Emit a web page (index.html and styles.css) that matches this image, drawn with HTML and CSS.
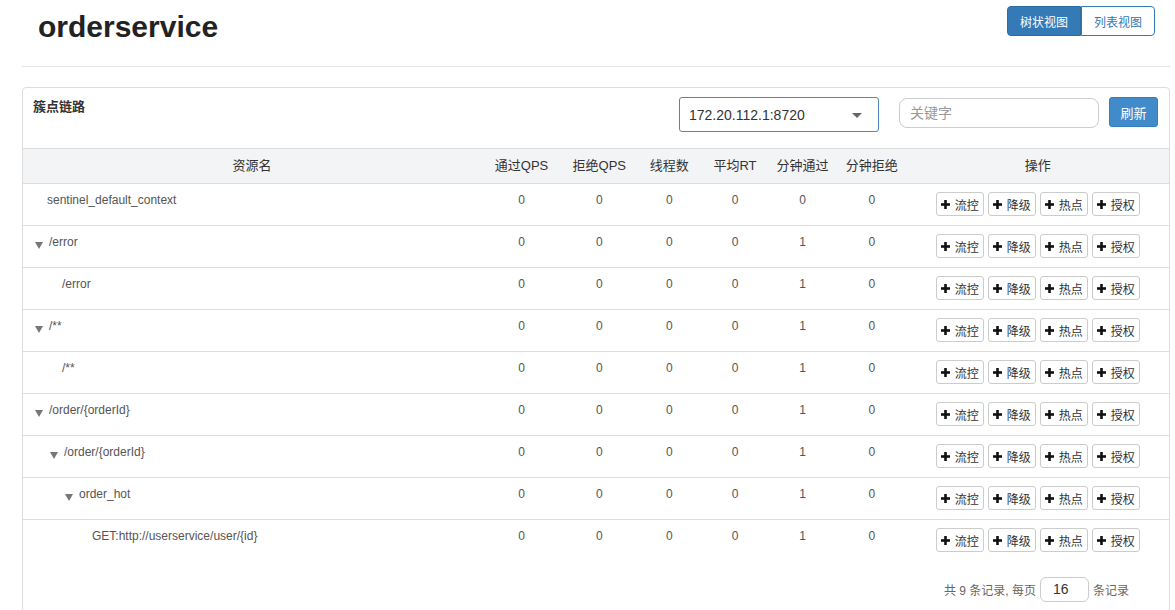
FILE: index.html
```html
<!DOCTYPE html>
<html lang="zh-CN">
<head>
<meta charset="utf-8">
<title>orderservice</title>
<link rel="stylesheet" href="styles.css">
</head>
<body>
<div class="page">
  <header class="topbar">
    <h1 class="title">orderservice</h1>
    <div class="btn-group">
      <button class="seg seg-active">树状视图</button>
      <button class="seg">列表视图</button>
    </div>
  </header>

  <section class="panel">
    <div class="panel-head">
      <div class="panel-title">簇点链路</div>
      <div class="select"><span>172.20.112.1:8720</span><span class="caret"></span></div>
      <input class="search" type="text" placeholder="关键字">
      <button class="btn-refresh">刷新</button>
    </div>

    <div class="tbl">
      <div class="row head">
        <div class="th">资源名</div>
        <div class="th">通过QPS</div>
        <div class="th">拒绝QPS</div>
        <div class="th">线程数</div>
        <div class="th">平均RT</div>
        <div class="th">分钟通过</div>
        <div class="th">分钟拒绝</div>
        <div class="th">操作</div>
      </div>

      <div class="row data">
        <div class="td name leaf lvl0">sentinel_default_context</div>
        <div class="td num">0</div><div class="td num">0</div><div class="td num">0</div><div class="td num">0</div><div class="td num">0</div><div class="td num">0</div>
        <div class="td ops"><button class="op"><svg class="plus" viewBox="0 0 9 9"><rect x="0" y="3.2" width="9" height="2.6"/><rect x="3.2" y="0" width="2.6" height="9"/></svg>流控</button><button class="op"><svg class="plus" viewBox="0 0 9 9"><rect x="0" y="3.2" width="9" height="2.6"/><rect x="3.2" y="0" width="2.6" height="9"/></svg>降级</button><button class="op"><svg class="plus" viewBox="0 0 9 9"><rect x="0" y="3.2" width="9" height="2.6"/><rect x="3.2" y="0" width="2.6" height="9"/></svg>热点</button><button class="op"><svg class="plus" viewBox="0 0 9 9"><rect x="0" y="3.2" width="9" height="2.6"/><rect x="3.2" y="0" width="2.6" height="9"/></svg>授权</button></div>
      </div>

      <div class="row data">
        <div class="td name parent lvl0"><span class="tri"></span>/error</div>
        <div class="td num">0</div><div class="td num">0</div><div class="td num">0</div><div class="td num">0</div><div class="td num">1</div><div class="td num">0</div>
        <div class="td ops"><button class="op"><svg class="plus" viewBox="0 0 9 9"><rect x="0" y="3.2" width="9" height="2.6"/><rect x="3.2" y="0" width="2.6" height="9"/></svg>流控</button><button class="op"><svg class="plus" viewBox="0 0 9 9"><rect x="0" y="3.2" width="9" height="2.6"/><rect x="3.2" y="0" width="2.6" height="9"/></svg>降级</button><button class="op"><svg class="plus" viewBox="0 0 9 9"><rect x="0" y="3.2" width="9" height="2.6"/><rect x="3.2" y="0" width="2.6" height="9"/></svg>热点</button><button class="op"><svg class="plus" viewBox="0 0 9 9"><rect x="0" y="3.2" width="9" height="2.6"/><rect x="3.2" y="0" width="2.6" height="9"/></svg>授权</button></div>
      </div>

      <div class="row data">
        <div class="td name leaf lvl1">/error</div>
        <div class="td num">0</div><div class="td num">0</div><div class="td num">0</div><div class="td num">0</div><div class="td num">1</div><div class="td num">0</div>
        <div class="td ops"><button class="op"><svg class="plus" viewBox="0 0 9 9"><rect x="0" y="3.2" width="9" height="2.6"/><rect x="3.2" y="0" width="2.6" height="9"/></svg>流控</button><button class="op"><svg class="plus" viewBox="0 0 9 9"><rect x="0" y="3.2" width="9" height="2.6"/><rect x="3.2" y="0" width="2.6" height="9"/></svg>降级</button><button class="op"><svg class="plus" viewBox="0 0 9 9"><rect x="0" y="3.2" width="9" height="2.6"/><rect x="3.2" y="0" width="2.6" height="9"/></svg>热点</button><button class="op"><svg class="plus" viewBox="0 0 9 9"><rect x="0" y="3.2" width="9" height="2.6"/><rect x="3.2" y="0" width="2.6" height="9"/></svg>授权</button></div>
      </div>

      <div class="row data">
        <div class="td name parent lvl0"><span class="tri"></span>/**</div>
        <div class="td num">0</div><div class="td num">0</div><div class="td num">0</div><div class="td num">0</div><div class="td num">1</div><div class="td num">0</div>
        <div class="td ops"><button class="op"><svg class="plus" viewBox="0 0 9 9"><rect x="0" y="3.2" width="9" height="2.6"/><rect x="3.2" y="0" width="2.6" height="9"/></svg>流控</button><button class="op"><svg class="plus" viewBox="0 0 9 9"><rect x="0" y="3.2" width="9" height="2.6"/><rect x="3.2" y="0" width="2.6" height="9"/></svg>降级</button><button class="op"><svg class="plus" viewBox="0 0 9 9"><rect x="0" y="3.2" width="9" height="2.6"/><rect x="3.2" y="0" width="2.6" height="9"/></svg>热点</button><button class="op"><svg class="plus" viewBox="0 0 9 9"><rect x="0" y="3.2" width="9" height="2.6"/><rect x="3.2" y="0" width="2.6" height="9"/></svg>授权</button></div>
      </div>

      <div class="row data">
        <div class="td name leaf lvl1">/**</div>
        <div class="td num">0</div><div class="td num">0</div><div class="td num">0</div><div class="td num">0</div><div class="td num">1</div><div class="td num">0</div>
        <div class="td ops"><button class="op"><svg class="plus" viewBox="0 0 9 9"><rect x="0" y="3.2" width="9" height="2.6"/><rect x="3.2" y="0" width="2.6" height="9"/></svg>流控</button><button class="op"><svg class="plus" viewBox="0 0 9 9"><rect x="0" y="3.2" width="9" height="2.6"/><rect x="3.2" y="0" width="2.6" height="9"/></svg>降级</button><button class="op"><svg class="plus" viewBox="0 0 9 9"><rect x="0" y="3.2" width="9" height="2.6"/><rect x="3.2" y="0" width="2.6" height="9"/></svg>热点</button><button class="op"><svg class="plus" viewBox="0 0 9 9"><rect x="0" y="3.2" width="9" height="2.6"/><rect x="3.2" y="0" width="2.6" height="9"/></svg>授权</button></div>
      </div>

      <div class="row data">
        <div class="td name parent lvl0"><span class="tri"></span>/order/{orderId}</div>
        <div class="td num">0</div><div class="td num">0</div><div class="td num">0</div><div class="td num">0</div><div class="td num">1</div><div class="td num">0</div>
        <div class="td ops"><button class="op"><svg class="plus" viewBox="0 0 9 9"><rect x="0" y="3.2" width="9" height="2.6"/><rect x="3.2" y="0" width="2.6" height="9"/></svg>流控</button><button class="op"><svg class="plus" viewBox="0 0 9 9"><rect x="0" y="3.2" width="9" height="2.6"/><rect x="3.2" y="0" width="2.6" height="9"/></svg>降级</button><button class="op"><svg class="plus" viewBox="0 0 9 9"><rect x="0" y="3.2" width="9" height="2.6"/><rect x="3.2" y="0" width="2.6" height="9"/></svg>热点</button><button class="op"><svg class="plus" viewBox="0 0 9 9"><rect x="0" y="3.2" width="9" height="2.6"/><rect x="3.2" y="0" width="2.6" height="9"/></svg>授权</button></div>
      </div>

      <div class="row data">
        <div class="td name parent lvl1"><span class="tri"></span>/order/{orderId}</div>
        <div class="td num">0</div><div class="td num">0</div><div class="td num">0</div><div class="td num">0</div><div class="td num">1</div><div class="td num">0</div>
        <div class="td ops"><button class="op"><svg class="plus" viewBox="0 0 9 9"><rect x="0" y="3.2" width="9" height="2.6"/><rect x="3.2" y="0" width="2.6" height="9"/></svg>流控</button><button class="op"><svg class="plus" viewBox="0 0 9 9"><rect x="0" y="3.2" width="9" height="2.6"/><rect x="3.2" y="0" width="2.6" height="9"/></svg>降级</button><button class="op"><svg class="plus" viewBox="0 0 9 9"><rect x="0" y="3.2" width="9" height="2.6"/><rect x="3.2" y="0" width="2.6" height="9"/></svg>热点</button><button class="op"><svg class="plus" viewBox="0 0 9 9"><rect x="0" y="3.2" width="9" height="2.6"/><rect x="3.2" y="0" width="2.6" height="9"/></svg>授权</button></div>
      </div>

      <div class="row data">
        <div class="td name parent lvl2"><span class="tri"></span>order_hot</div>
        <div class="td num">0</div><div class="td num">0</div><div class="td num">0</div><div class="td num">0</div><div class="td num">1</div><div class="td num">0</div>
        <div class="td ops"><button class="op"><svg class="plus" viewBox="0 0 9 9"><rect x="0" y="3.2" width="9" height="2.6"/><rect x="3.2" y="0" width="2.6" height="9"/></svg>流控</button><button class="op"><svg class="plus" viewBox="0 0 9 9"><rect x="0" y="3.2" width="9" height="2.6"/><rect x="3.2" y="0" width="2.6" height="9"/></svg>降级</button><button class="op"><svg class="plus" viewBox="0 0 9 9"><rect x="0" y="3.2" width="9" height="2.6"/><rect x="3.2" y="0" width="2.6" height="9"/></svg>热点</button><button class="op"><svg class="plus" viewBox="0 0 9 9"><rect x="0" y="3.2" width="9" height="2.6"/><rect x="3.2" y="0" width="2.6" height="9"/></svg>授权</button></div>
      </div>

      <div class="row data">
        <div class="td name leaf lvl3">GET:http://userservice/user/{id}</div>
        <div class="td num">0</div><div class="td num">0</div><div class="td num">0</div><div class="td num">0</div><div class="td num">1</div><div class="td num">0</div>
        <div class="td ops"><button class="op"><svg class="plus" viewBox="0 0 9 9"><rect x="0" y="3.2" width="9" height="2.6"/><rect x="3.2" y="0" width="2.6" height="9"/></svg>流控</button><button class="op"><svg class="plus" viewBox="0 0 9 9"><rect x="0" y="3.2" width="9" height="2.6"/><rect x="3.2" y="0" width="2.6" height="9"/></svg>降级</button><button class="op"><svg class="plus" viewBox="0 0 9 9"><rect x="0" y="3.2" width="9" height="2.6"/><rect x="3.2" y="0" width="2.6" height="9"/></svg>热点</button><button class="op"><svg class="plus" viewBox="0 0 9 9"><rect x="0" y="3.2" width="9" height="2.6"/><rect x="3.2" y="0" width="2.6" height="9"/></svg>授权</button></div>
      </div>
    </div>

    <div class="pager">
      <span>共 9 条记录, 每页</span>
      <span class="pagesize">16</span>
      <span>条记录</span>
    </div>
  </section>
</div>
</body>
</html>
```

FILE: styles.css
```css
* { box-sizing: border-box; }

html, body {
  margin: 0;
  padding: 0;
  background: #fff;
}

body {
  font-family: "Liberation Sans", "Noto Sans CJK SC", sans-serif;
  color: #333;
}

.page {
  padding: 0 5px 0 22px;
}

/* ---------- top bar ---------- */
.topbar {
  display: flex;
  justify-content: space-between;
  align-items: flex-start;
  height: 67px;
  border-bottom: 1px solid #e5e5e5;
  padding: 0 15px 0 16px;
}

.title {
  margin: 0;
  padding-top: 10px;
  font-size: 30px;
  line-height: 33px;
  font-weight: bold;
  color: #222;
}

.btn-group {
  display: flex;
  margin-top: 6px;
}

.seg {
  width: 74px;
  height: 30px;
  padding: 0;
  font-family: inherit;
  font-size: 12px;
  background: #fff;
  color: #337ab7;
  border: 1px solid #337ab7;
  border-radius: 0 4px 4px 0;
}

.seg-active {
  background: #337ab7;
  color: #fff;
  border-color: #2e6da4;
  border-radius: 4px 0 0 4px;
}

/* ---------- panel ---------- */
.panel {
  margin-top: 20px;
  border: 1px solid #ddd;
  border-radius: 4px;
}

.panel-head {
  display: flex;
  align-items: flex-start;
  height: 60px;
  padding: 9px 11px 0 10px;
}

.panel-title {
  flex: 1;
  font-size: 13px;
  font-weight: bold;
  line-height: 20px;
  color: #333;
}

.select {
  width: 200px;
  height: 35px;
  display: flex;
  align-items: center;
  justify-content: space-between;
  padding: 0 16px 0 9px;
  border: 1px solid #4f86c0;
  border-radius: 3px;
  font-size: 14px;
  color: #333;
}

.caret {
  width: 0;
  height: 0;
  border-left: 5px solid transparent;
  border-right: 5px solid transparent;
  border-top: 5px solid #666;
  margin-top: 2px;
}

.search {
  width: 200px;
  height: 30px;
  margin: 1px 0 0 20px;
  padding: 0 10px;
  border: 1px solid #ccc;
  border-radius: 8px;
  font-family: inherit;
  font-size: 14px;
  color: #333;
  outline: none;
}

.search::placeholder {
  color: #999;
}

.btn-refresh {
  width: 49px;
  height: 30px;
  margin-left: 10px;
  padding: 0;
  background: #428bca;
  border: 1px solid #357ebd;
  border-radius: 3px;
  color: #fff;
  font-family: inherit;
  font-size: 13px;
}

/* ---------- table ---------- */
.row {
  display: grid;
  grid-template-columns: 458px 81px 74.5px 65.5px 66px 69px 69.5px 1fr;
}

.head {
  height: 36px;
  background: #f3f4f5;
  border-top: 1px solid #ddd;
  border-bottom: 1px solid #ddd;
  align-items: center;
}

.th {
  text-align: center;
  font-size: 13px;
  line-height: 18px;
  color: #333;
}

.data {
  height: 41px;
  box-sizing: content-box;
}

.data + .data {
  border-top: 1px solid #ddd;
}

.td {
  padding-top: 8px;
  font-size: 12px;
  line-height: 17px;
  color: #555;
}

.num {
  text-align: center;
}

.name {
  white-space: nowrap;
}

.leaf.lvl0 { padding-left: 24px; }
.leaf.lvl1 { padding-left: 39px; }
.leaf.lvl2 { padding-left: 54px; }
.leaf.lvl3 { padding-left: 69px; }

.parent.lvl0 { padding-left: 12px; }
.parent.lvl1 { padding-left: 27px; }
.parent.lvl2 { padding-left: 42px; }

.tri {
  display: inline-block;
  width: 0;
  height: 0;
  border-left: 4.5px solid transparent;
  border-right: 4.5px solid transparent;
  border-top: 7px solid #777;
  margin-right: 6px;
  vertical-align: -3px;
}

.ops {
  padding-top: 8px;
  display: flex;
  justify-content: center;
  align-items: flex-start;
  gap: 4px;
}

.op {
  width: 48px;
  height: 24px;
  padding: 0;
  display: flex;
  align-items: center;
  justify-content: center;
  gap: 5px;
  background: #fff;
  border: 1px solid #ccc;
  border-radius: 3px;
  font-family: inherit;
  font-size: 12px;
  color: #333;
}

.plus {
  width: 9px;
  height: 9px;
  fill: #111;
  flex: none;
}

/* ---------- pager ---------- */
.pager {
  display: flex;
  justify-content: flex-end;
  align-items: center;
  gap: 4px;
  padding: 16px 40px 10px 0;
  font-size: 12px;
  color: #666;
}

.pagesize {
  width: 49px;
  height: 25px;
  padding-left: 12px;
  border: 1px solid #ccc;
  border-radius: 6px;
  font-size: 14px;
  line-height: 23px;
  color: #333;
}
```
